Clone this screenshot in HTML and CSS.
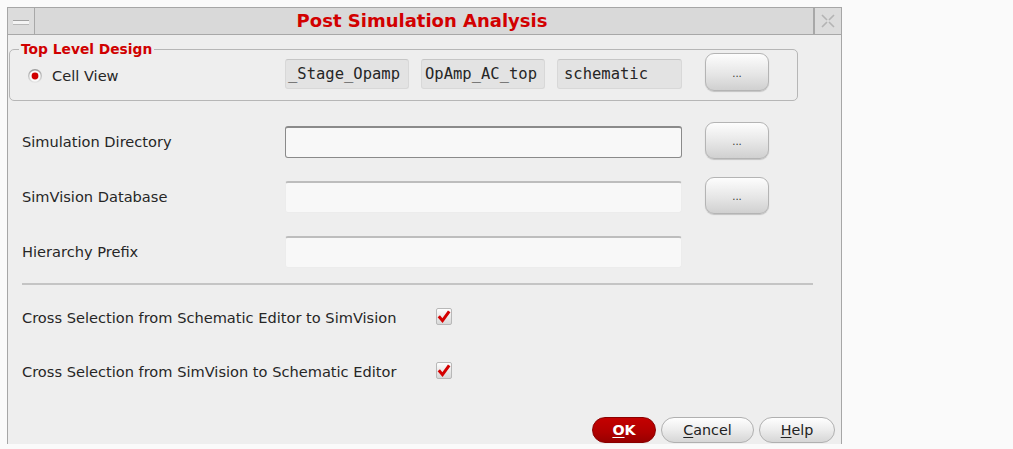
FILE: index.html
```html
<!DOCTYPE html>
<html>
<head>
<meta charset="utf-8">
<link rel="stylesheet" href="styles.css">
</head>
<body>
<div class="dialog">
  <div class="titlebar">
    <div class="tb-btn tb-min"><span class="min-bar"></span></div>
    <div class="tb-title">Post Simulation Analysis</div>
    <div class="tb-btn tb-close">
      <svg width="18" height="18" viewBox="0 0 18 18"><path d="M3 3 L8 8 M15 3 L10 8 M3 15 L8 10 M15 15 L10 10" stroke="#b4b4b4" stroke-width="1.6" fill="none"/></svg>
    </div>
  </div>
  <div class="content">
    <fieldset class="group">
      <legend class="group-title">Top Level Design</legend>
      <div class="group-row">
        <label class="radio-label">
          <svg class="radio" width="16" height="16" viewBox="0 0 16 16">
            <defs><linearGradient id="rg" x1="0" y1="0" x2="0" y2="1"><stop offset="0" stop-color="#9a9a9a"/><stop offset="1" stop-color="#e8e8e8"/></linearGradient></defs>
            <circle cx="8" cy="8" r="7" fill="url(#rg)"/>
            <circle cx="8" cy="8" r="5.6" fill="#fafafa"/>
            <circle cx="8" cy="8" r="3.4" fill="#d00000"/>
          </svg>
          <span>Cell View</span>
        </label>
        <div class="ro-field f-lib">_Stage_Opamp</div>
        <div class="ro-field f-cell">OpAmp_AC_top</div>
        <div class="ro-field f-view">schematic</div>
        <button class="browse browse-top">...</button>
      </div>
    </fieldset>

    <div class="form">
      <div class="form-label">Simulation Directory</div>
      <div class="input focused"></div>
      <button class="browse">...</button>

      <div class="form-label">SimVision Database</div>
      <div class="input"></div>
      <button class="browse">...</button>

      <div class="form-label">Hierarchy Prefix</div>
      <div class="input"></div>
      <div></div>
    </div>

    <div class="separator"></div>

    <div class="checks">
      <div class="form-label">Cross Selection from Schematic Editor to SimVision</div>
      <svg class="check" width="16" height="17" viewBox="0 0 16 17">
        <defs><linearGradient id="cg" x1="0" y1="0" x2="0" y2="1"><stop offset="0" stop-color="#ffffff"/><stop offset="1" stop-color="#d6d6d6"/></linearGradient></defs>
        <rect x="0.5" y="0.5" width="15" height="16" rx="1.5" fill="url(#cg)" stroke="#b8b8b8"/>
        <path d="M2.8 8.2 L6.5 12.6 L13.2 3.4" stroke="#d40000" stroke-width="3" fill="none"/>
      </svg>
      <div class="form-label">Cross Selection from SimVision to Schematic Editor</div>
      <svg class="check" width="16" height="17" viewBox="0 0 16 17">
        <rect x="0.5" y="0.5" width="15" height="16" rx="1.5" fill="url(#cg)" stroke="#b8b8b8"/>
        <path d="M2.8 8.2 L6.5 12.6 L13.2 3.4" stroke="#d40000" stroke-width="3" fill="none"/>
      </svg>
    </div>

    <div class="actions">
      <button class="act ok"><u>O</u>K</button>
      <button class="act cancel"><u>C</u>ancel</button>
      <button class="act help"><u>H</u>elp</button>
    </div>
  </div>
</div>
</body>
</html>
```

FILE: styles.css
```css
html, body {
  margin: 0;
  padding: 0;
  background: #fafafa;
}

body {
  font-family: "DejaVu Sans", "Liberation Sans", sans-serif;
  color: #262626;
}

.dialog {
  box-sizing: border-box;
  margin: 7px 0 0 7px;
  width: 835px;
  height: 437px;
  border: 1px solid #a6a6a6;
  border-bottom: none;
  background: #eeeeee;
  display: flex;
  flex-direction: column;
  overflow: hidden;
}

.titlebar {
  display: flex;
  height: 27px;
  background: #d9d9d9;
}

.tb-btn {
  box-sizing: border-box;
  width: 27px;
  height: 27px;
  background: #dcdcdc;
  border-right: 1px solid #a8a8a8;
  border-bottom: 1px solid #a8a8a8;
  display: flex;
  align-items: center;
  justify-content: center;
}

.tb-close {
  width: 27px;
  border-right: none;
  border-left: 1px solid #a8a8a8;
}

.min-bar {
  display: block;
  width: 16px;
  height: 3px;
  background: #f4f4f4;
  border-top: 1px solid #a0a0a0;
  border-bottom: 1px solid #b8b8b8;
  margin-top: 2px;
}

.tb-title {
  flex: 1;
  box-sizing: border-box;
  border-bottom: 1px solid #a8a8a8;
  border-right: 1px solid #a8a8a8;
  text-align: center;
  color: #d20000;
  font-weight: bold;
  font-size: 18px;
  line-height: 26px;
  padding-right: 4px;
}

.content {
  flex: 1;
  display: flex;
  flex-direction: column;
}

.group {
  margin: 7px 0 0 1px;
  width: 789px;
  box-sizing: border-box;
  border: 1px solid #b6b6b6;
  border-radius: 5px;
  padding: 0 0 0 17px;
  height: 59px;
}

.group-title {
  margin-left: -8px;
  padding: 0 2px;
  color: #d00000;
  font-weight: bold;
  font-size: 13.8px;
  line-height: 14px;
}

.group-row {
  display: flex;
  align-items: center;
  height: 35px;
}

.radio-label {
  display: flex;
  align-items: center;
  width: 258px;
  font-size: 14.6px;
  margin-top: 4px;
}

.radio {
  margin-right: 9px;
}

.ro-field {
  box-sizing: border-box;
  width: 124px;
  height: 30px;
  background: #e3e3e3;
  border: 1px solid #d8d8d8;
  border-top-color: #c6c6c6;
  border-radius: 3px;
  font-family: "DejaVu Sans Mono", "Liberation Mono", monospace;
  font-size: 15.5px;
  line-height: 28px;
  white-space: nowrap;
  overflow: hidden;
  padding-left: 2px;
  margin-right: 12px;
}

.f-cell {
  padding-left: 3px;
}

.f-view {
  width: 125px;
  padding-left: 6px;
  margin-right: 23px;
}

.browse {
  box-sizing: border-box;
  width: 64px;
  height: 37px;
  border: 1px solid #b4b4b4;
  border-radius: 9px;
  background: linear-gradient(#fdfdfd, #e6e6e6 55%, #d0d0d0);
  box-shadow: 0 1px 1px rgba(0,0,0,0.18);
  font-family: "DejaVu Sans", sans-serif;
  font-size: 10px;
  color: #333;
  padding: 2px 0 0;
}

.browse-top {
  height: 38px;
  margin-bottom: 3px;
}

.form {
  display: grid;
  grid-template-columns: 263px 397px 87px;
  grid-auto-rows: 55px;
  align-items: center;
  padding-left: 14px;
  margin-top: 13px;
}

.form .browse {
  justify-self: end;
  margin-bottom: 3px;
}

.form-label {
  font-size: 14.6px;
  white-space: nowrap;
}

.input {
  box-sizing: border-box;
  height: 32px;
  background: #f8f8f8;
  border: 1px solid #ececec;
  border-top: 2px solid #bdbdbd;
  border-radius: 3px;
}

.input.focused {
  border: 1px solid #8a8a8a;
  border-top-width: 2px;
}

.separator {
  margin: 4px 28px 0 14px;
  height: 0;
  border-top: 2px solid #c4c4c4;
}

.checks {
  display: grid;
  grid-template-columns: 414px 16px;
  grid-auto-rows: 54px;
  align-items: center;
  padding-left: 14px;
  margin-top: 5px;
}

.check {
  margin-top: -2px;
}

.actions {
  display: flex;
  justify-content: flex-end;
  gap: 5px;
  padding-right: 6px;
  margin-top: 19px;
}

.act {
  box-sizing: border-box;
  height: 26px;
  border-radius: 13px;
  font-family: "DejaVu Sans", sans-serif;
  font-size: 14.3px;
  padding: 0;
  line-height: 24px;
  color: #222;
  border: 1px solid #b0b0b0;
  background: linear-gradient(#fefefe, #ececec 50%, #d6d6d6);
}

.act u {
  text-decoration-thickness: 1px;
  text-underline-offset: 2px;
}

.ok {
  width: 64px;
  background: linear-gradient(#c40000, #b00000 60%, #980000);
  border-color: #8a0000;
  color: #ffffff;
  font-weight: bold;
}

.cancel {
  width: 93px;
}

.help {
  width: 76px;
}
```
